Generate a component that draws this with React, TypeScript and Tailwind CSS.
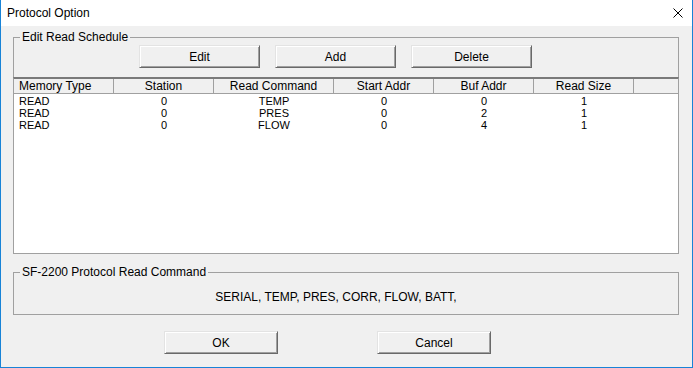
import React from 'react'

// Read schedule rows shown in the list view
const rows = [
  { type: 'READ', station: '0', command: 'TEMP', start: '0', buf: '0', size: '1' },
  { type: 'READ', station: '0', command: 'PRES', start: '0', buf: '2', size: '1' },
  { type: 'READ', station: '0', command: 'FLOW', start: '0', buf: '4', size: '1' },
]

const columns = [
  { label: 'Memory Type', width: 'w-[100px]' },
  { label: 'Station', width: 'w-[100px]' },
  { label: 'Read Command', width: 'w-[120px]' },
  { label: 'Start Addr', width: 'w-[100px]' },
  { label: 'Buf Addr', width: 'w-[100px]' },
  { label: 'Read Size', width: 'w-[100px]' },
]

function WinButton({ label, width }: { label: string; width: string }) {
  return (
    <button
      className={`${width} h-[23px] bg-[#f0f0f0] border border-t-[#e3e3e3] border-l-[#e3e3e3] border-r-[#696969] border-b-[#696969] shadow-[inset_1px_1px_0_#ffffff,inset_-1px_-1px_0_#a0a0a0] text-[12px] leading-[14px] text-black`}
    >
      {label}
    </button>
  )
}

export default function App() {
  return (
    <div
      className="w-[693px] h-[368px] flex flex-col border-x border-b border-[#1883d7] bg-[#f0f0f0] text-black"
      style={{ fontFamily: '"Liberation Sans", Arial, sans-serif' }}
    >
      {/* Title bar */}
      <div className="h-[26px] bg-white flex items-center justify-between pl-[6px] pr-[9px]">
        <span className="text-[12px] leading-[14px]">Protocol Option</span>
        <svg width="10" height="10" viewBox="0 0 10 10" className="shrink-0">
          <path d="M0.5 0.5 L9.5 9.5 M9.5 0.5 L0.5 9.5" stroke="#000" strokeWidth="1" fill="none" />
        </svg>
      </div>

      {/* Client area */}
      <div className="flex-1 flex flex-col pl-[12px] pr-[13px] pt-[4px]">
        {/* Edit Read Schedule group */}
        <fieldset className="border border-b-0 border-[#a0a0a0]">
          <legend className="ml-[6px] px-[2px] text-[12px] leading-[14px]">Edit Read Schedule</legend>
          <div className="flex gap-[15px] pl-[125px] mt-[1px]">
            <WinButton label="Edit" width="w-[121px]" />
            <WinButton label="Add" width="w-[121px]" />
            <WinButton label="Delete" width="w-[121px]" />
          </div>

          {/* List view */}
          <div className="-mx-px mt-[9px] h-[177px] bg-white border border-[#a0a0a0] border-t-2 border-t-[#7a7a7a]">
            <div className="flex h-[15px] bg-[#f0f0f0] border-b border-[#a0a0a0] text-[12px]">
              {columns.map((c, i) => (
                <div
                  key={c.label}
                  className={`${c.width} shrink-0 border-r border-[#a0a0a0] leading-[14px] ${i === 0 ? 'pl-[5px]' : 'text-center'}`}
                >
                  {c.label}
                </div>
              ))}
            </div>
            <div className="pt-[1px] text-[11px]">
              {rows.map((r, idx) => (
                <div key={idx} className="flex h-[12px] leading-[12px]">
                  <div className="w-[100px] shrink-0 pl-[5px]">{r.type}</div>
                  <div className="w-[100px] shrink-0 text-center">{r.station}</div>
                  <div className="w-[120px] shrink-0 text-center">{r.command}</div>
                  <div className="w-[100px] shrink-0 text-center">{r.start}</div>
                  <div className="w-[100px] shrink-0 text-center">{r.buf}</div>
                  <div className="w-[100px] shrink-0 text-center">{r.size}</div>
                </div>
              ))}
            </div>
          </div>
        </fieldset>

        {/* Protocol read command group */}
        <fieldset className="mt-[11px] border border-[#a0a0a0]">
          <legend className="ml-[6px] px-[2px] text-[12px] leading-[14px]">SF-2200 Protocol Read Command</legend>
          <div className="h-[35px] flex items-center justify-center pr-[20px] text-[12px] leading-[14px]">
            SERIAL, TEMP, PRES, CORR, FLOW, BATT,
          </div>
        </fieldset>

        {/* Dialog buttons */}
        <div className="flex gap-[99px] pl-[151px] mt-[16px]">
          <WinButton label="OK" width="w-[114px]" />
          <WinButton label="Cancel" width="w-[114px]" />
        </div>
      </div>
    </div>
  )
}
